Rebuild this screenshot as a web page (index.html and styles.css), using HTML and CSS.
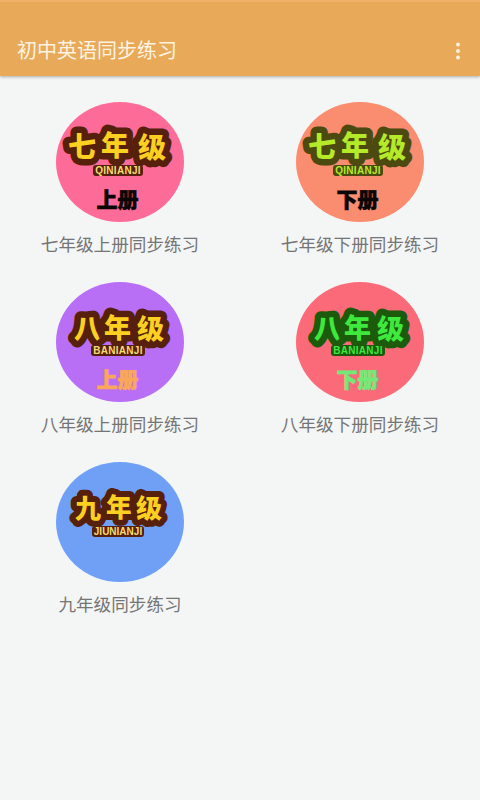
FILE: index.html
```html
<!DOCTYPE html>
<html lang="zh-CN">
<head>
<meta charset="utf-8">
<title>初中英语同步练习</title>
<link rel="stylesheet" href="styles.css">
</head>
<body>
<header class="appbar">
  <h1 class="title">初中英语同步练习</h1>
  <svg class="more" width="6" height="18" viewBox="0 0 6 18"><circle cx="3" cy="2.5" r="2" fill="#fbf3e3"/><circle cx="3" cy="9" r="2" fill="#fbf3e3"/><circle cx="3" cy="15.5" r="2" fill="#fbf3e3"/></svg>
</header>
<main class="grid">
  <a class="item">
    <div class="badge pink yellow">
      <svg class="logo" viewBox="0 0 128 46"><text x="12" y="41">七</text><text x="45" y="40">年</text><text x="82" y="42">级</text></svg>
      <div class="pinyin">QINIANJI</div>
      <div class="term">上册</div>
    </div>
    <div class="label">七年级上册同步练习</div>
  </a>
  <a class="item">
    <div class="badge salmon lime">
      <svg class="logo" viewBox="0 0 128 46"><text x="12" y="41">七</text><text x="45" y="40">年</text><text x="82" y="42">级</text></svg>
      <div class="pinyin">QINIANJI</div>
      <div class="term">下册</div>
    </div>
    <div class="label">七年级下册同步练习</div>
  </a>
  <a class="item">
    <div class="badge purple yellow">
      <svg class="logo" viewBox="0 0 128 46"><text class="mid" x="18" y="43">八</text><text class="mid" x="48" y="42">年</text><text class="mid" x="81" y="43">级</text></svg>
      <div class="pinyin">BANIANJI</div>
      <div class="term orange">上册</div>
    </div>
    <div class="label">八年级上册同步练习</div>
  </a>
  <a class="item">
    <div class="badge coral green">
      <svg class="logo" viewBox="0 0 128 46"><text class="mid" x="18" y="43">八</text><text class="mid" x="48" y="42">年</text><text class="mid" x="81" y="43">级</text></svg>
      <div class="pinyin">BANIANJI</div>
      <div class="term mint">下册</div>
    </div>
    <div class="label">八年级下册同步练习</div>
  </a>
  <a class="item">
    <div class="badge blue yellow">
      <svg class="logo" viewBox="0 0 128 46"><text class="low" x="19" y="42">九</text><text class="low" x="50" y="41">年</text><text class="low" x="80" y="42">级</text></svg>
      <div class="pinyin tight">JIUNIANJI</div>
    </div>
    <div class="label">九年级同步练习</div>
  </a>
</main>
</body>
</html>
```
FILE: styles.css
```css
* { box-sizing: border-box; }
html, body { margin: 0; height: 100%; }
body {
  width: 480px;
  height: 800px;
  overflow: hidden;
  background: #f4f6f6;
  font-family: "Noto Sans CJK SC", "Noto Sans", sans-serif;
}
.appbar {
  height: 76px;
  padding: 25px 19px 0 17px;
  display: flex;
  align-items: center;
  justify-content: space-between;
  background: #e8aa58;
  border-top: 2px solid #f0b168;
  box-shadow: 0 1px 3px rgba(0, 0, 0, .3);
}
.title {
  margin: -4px 0 0;
  font-size: 20px;
  line-height: 28px;
  font-weight: 400;
  color: #fbf3e3;
}
.more { display: block; margin-top: -2px; }
.grid {
  display: grid;
  grid-template-columns: 240px 240px;
  grid-auto-rows: 180px;
  padding-top: 26px;
}
.item {
  display: flex;
  flex-direction: column;
  align-items: center;
}
.badge {
  width: 128px;
  height: 120px;
  border-radius: 50%;
  display: flex;
  flex-direction: column;
  align-items: center;
  padding-top: 14px;
}
.pink { background: #fd6c99; }
.salmon { background: #fa8c70; }
.purple { background: #b86ff5; }
.coral { background: #fb6a78; }
.blue { background: #6fa0f6; }
.yellow { --ink: #56200c; --fill: #fbd020; }
.lime { --ink: #4c4a10; --fill: #b4ea28; }
.green { --ink: #1c5a0c; --fill: #3ee83c; }
.logo {
  display: block;
  flex: none;
  width: 128px;
  height: 46px;
  overflow: visible;
}
.logo text {
  font-family: "Noto Sans CJK SC", sans-serif;
  font-size: 28px;
  font-weight: 900;
  fill: var(--fill);
  stroke: var(--ink);
  stroke-width: 13px;
  stroke-linejoin: round;
  paint-order: stroke fill;
}
.logo text.mid { font-size: 27px; }
.logo text.low { font-size: 26px; stroke-width: 12px; }
.pinyin {
  flex: none;
  margin: 3px 4px 0 0;
  padding: 0 2px;
  height: 11px;
  font-family: "Liberation Sans", sans-serif;
  font-size: 10px;
  line-height: 11px;
  font-weight: 700;
  letter-spacing: .3px;
  color: var(--fill);
  background: var(--ink);
  border-radius: 3px;
}
.yellow .pinyin { color: #f6dc70; }
.pinyin.tight { letter-spacing: 0; margin-top: 4px; }
.term {
  margin: 10px 5px 0 0;
  font-size: 21px;
  line-height: 24px;
  font-weight: 900;
  color: #0a0606;
  -webkit-text-stroke: .6px currentColor;
}
.orange { color: #fba75a; }
.mint { color: #72ea78; }
.label {
  margin-top: 11px;
  font-size: 17.6px;
  line-height: 22px;
  color: #757575;
  white-space: nowrap;
}
```
